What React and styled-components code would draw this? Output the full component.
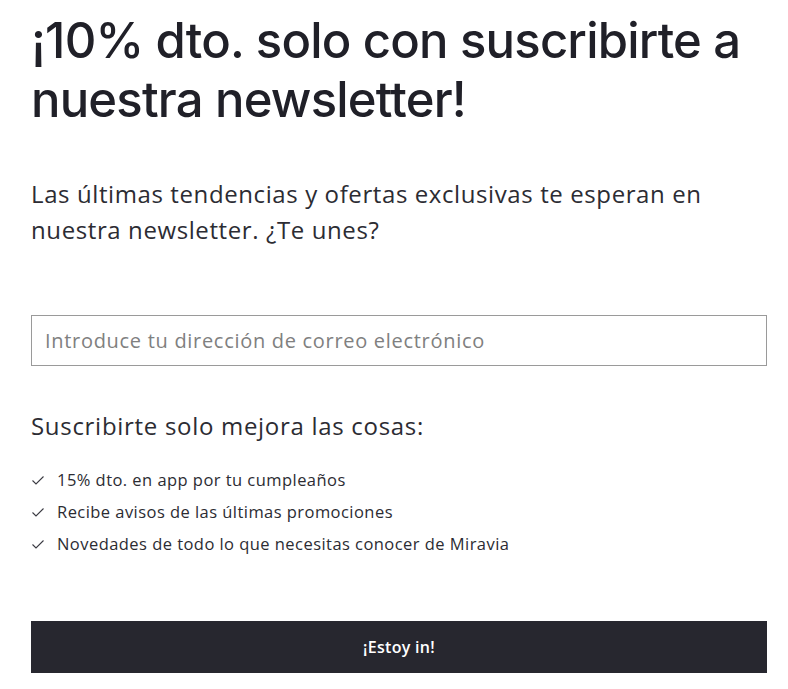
import React from 'react'
import styled, { createGlobalStyle } from 'styled-components'

const GlobalStyle = createGlobalStyle`
    body {
        margin: 0;
        background: #ffffff;
    }
`

const benefits = [
    '15% dto. en app por tu cumpleaños',
    'Recibe avisos de las últimas promociones',
    'Novedades de todo lo que necesitas conocer de Miravia',
]

const Check = () => (
    <svg width="14" height="14" viewBox="0 0 14 14" fill="none">
        <path d="M1.5 7.5 L5 11 L12.5 3.5" stroke="#3a3a42" strokeWidth="1.1" />
    </svg>
)

const App = () => {
    return (
        <Container>
            <GlobalStyle />
            <Title>¡10% dto. solo con suscribirte a nuestra newsletter!</Title>
            <Lead>Las últimas tendencias y ofertas exclusivas te esperan en nuestra newsletter. ¿Te unes?</Lead>
            <Input placeholder='Introduce tu dirección de correo electrónico' />
            <Subtitle>Suscribirte solo mejora las cosas:</Subtitle>
            <List>
                {benefits.map((b) => (
                    <Item key={b}>
                        <Check />
                        <span>{b}</span>
                    </Item>
                ))}
            </List>
            <Button>¡Estoy in!</Button>
        </Container>
    )
}

const Container = styled.div`
    width: 736px;
    margin-left: 31px;
    padding-top: 11px;
    display: flex;
    flex-direction: column;
    color: #23232b;
`

const Title = styled.h1`
    margin: 0;
    font-family: Inter, sans-serif;
    font-size: 49px;
    font-weight: 500;
    line-height: 59px;
    letter-spacing: -0.8px;
    color: #202028;
`

const Lead = styled.p`
    margin: 47px 0 0;
    font-family: "Open Sans", sans-serif;
    font-size: 24px;
    line-height: 36px;
    letter-spacing: 0.6px;
    color: #2c2c33;
    max-width: 700px;
`

const Input = styled.input`
    margin-top: 67px;
    height: 51px;
    box-sizing: border-box;
    border: 1px solid #9a9a9a;
    padding: 0 13px;
    font-family: "Open Sans", sans-serif;
    font-size: 20px;
    letter-spacing: 0.7px;
    color: #333;
    outline: none;

    &::placeholder {
        color: #808080;
    }
`

const Subtitle = styled.h2`
    margin: 45px 0 0;
    font-family: "Open Sans", sans-serif;
    font-size: 24px;
    font-weight: 400;
    line-height: 30px;
    letter-spacing: 0.7px;
    color: #2c2c33;
`

const List = styled.ul`
    list-style: none;
    margin: 27px 0 0;
    padding: 0;
    display: flex;
    flex-direction: column;
    gap: 8px;
`

const Item = styled.li`
    display: flex;
    align-items: center;
    gap: 12px;
    font-family: "Open Sans", sans-serif;
    font-size: 16.5px;
    line-height: 24px;
    letter-spacing: 0.45px;
    color: #2c2c33;
`

const Button = styled.button`
    margin-top: 65px;
    height: 52px;
    border: none;
    background-color: #27272f;
    color: #ffffff;
    font-family: "Open Sans", sans-serif;
    font-size: 16px;
    font-weight: 600;
    letter-spacing: 0.3px;
    cursor: pointer;
`

export default App
